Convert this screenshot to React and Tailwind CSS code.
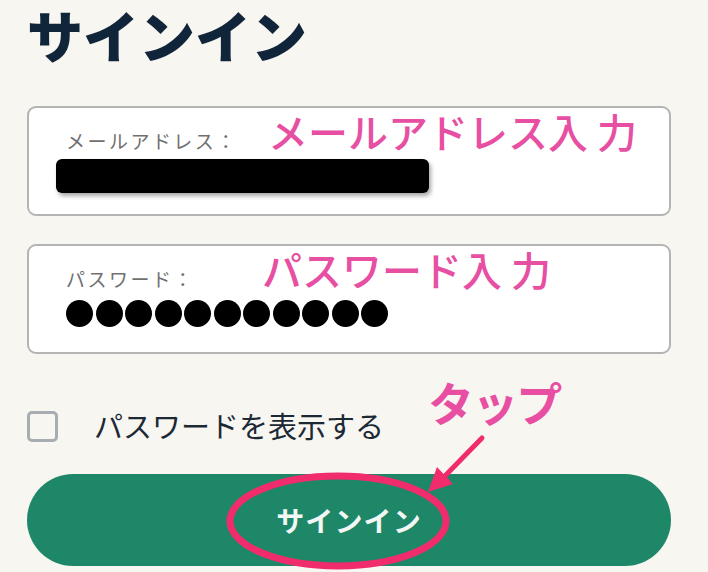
import React from "react";

const jp = { fontFamily: '"Noto Sans CJK JP", "Noto Sans", sans-serif' };

function Field({ label, children }) {
	return (
		<div className="h-[110px] rounded-[9px] border-2 border-[#b4b4b4] bg-white pl-[37px] pt-[23px]">
			<div className="text-[19px] leading-[1.1] tracking-[0.13em] text-[#707070]">{label}</div>
			{children}
		</div>
	);
}

export default function App() {
	return (
		<div className="relative min-h-[572px] w-full bg-[#f7f6f1]" style={jp}>
			<div className="pl-[27px] pr-[37px]">
				<h1 className="w-fit whitespace-nowrap pr-[4px] text-[56px] font-black leading-[1.2] text-[#10243a]">サインイン</h1>

				<div className="mt-[39px]">
					<Field label="メールアドレス：">
						<div className="-ml-[10px] mt-[7px] h-[34px] w-[373px] rounded-[6px] bg-black shadow-[2px_3px_4px_rgba(0,0,0,0.35)]" />
					</Field>
				</div>

				<div className="mt-[28px]">
					<Field label="パスワード：">
						<div className="mt-[10px] flex gap-[2.5px]">
							{Array.from({ length: 11 }).map((_, i) => (
								<div key={i} className="h-[27px] w-[27px] rounded-full bg-black" />
							))}
						</div>
					</Field>
				</div>

				<label className="mt-[56px] flex items-center gap-[36px]">
					<span className="h-[31px] w-[31px] rounded-[5px] border-[3px] border-[#a8adb2] bg-[#f7f6f1]" />
					<span className="text-[29px] leading-[1.1] text-[#1c2935]">パスワードを表示する</span>
				</label>

				<button className="mt-[32px] flex h-[92px] w-full items-center justify-center rounded-full bg-[#1e8767]">
					<span className="text-[28px] font-bold tracking-[0.04em] text-[#f2f7f5]">サインイン</span>
				</button>
			</div>

			<div className="absolute left-[268px] top-[109px] text-[40px] font-medium leading-[1.1] text-[#e74fa3]">メールアドレス入 力</div>
			<div className="absolute left-[262px] top-[247px] text-[40px] font-medium leading-[1.1] text-[#e74fa3]">パスワード入 力</div>
			<div className="absolute left-[428px] top-[376px] text-[46px] font-bold leading-[1.1] tracking-[-0.04em] text-[#e84fa3]">タップ</div>

			<svg className="pointer-events-none absolute left-[220px] top-[430px]" width="270" height="142" viewBox="220 430 270 142">
				<ellipse cx="338" cy="521" rx="108" ry="45" fill="none" stroke="#f12c6c" strokeWidth="7" />
				<line x1="482" y1="438" x2="440" y2="481" stroke="#f12c6c" strokeWidth="5" strokeLinecap="round" />
				<polygon points="428,492 437,467 453,484" fill="#f12c6c" />
			</svg>
		</div>
	);
}
